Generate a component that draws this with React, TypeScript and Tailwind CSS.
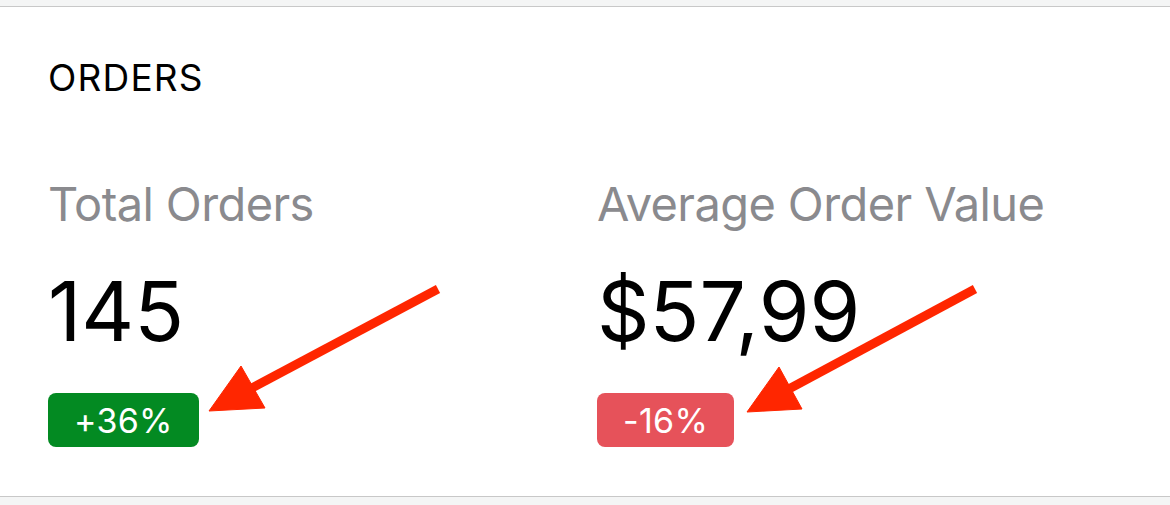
function Metric({ label, value, delta, tone }: { label: string; value: string; delta: string; tone: 'up' | 'down' }) {
  return (
    <div className="flex flex-col items-start">
      <div className="text-[47px] leading-[57px] text-[#8a8a8e] mt-[75px] tracking-[-0.6px]">{label}</div>
      <div className="text-[82px] leading-[82px] text-black mt-[39px]">{value}</div>
      <div
        className={`mt-[40px] h-[54px] rounded-[8px] px-[26px] text-[34px] leading-[54px] pt-px text-white tracking-[0.3px] ${
          tone === 'up' ? 'bg-[#038a22]' : 'bg-[#e6525a]'
        }`}
      >
        {delta}
      </div>
    </div>
  );
}

export default function App() {
  return (
    <div className="relative w-[1170px] h-[505px] bg-[#f4f5f5] font-['Inter',sans-serif] overflow-hidden">
      <div className="h-[6px]" />
      <div className="h-[491px] bg-white border-y border-[#c8c8c8] px-12 pt-[48px]">
        <div className="text-[37px] leading-[45px] text-black tracking-[1.2px]">ORDERS</div>
        <div className="grid grid-cols-[549px_1fr]">
          <Metric label="Total Orders" value="145" delta="+36%" tone="up" />
          <Metric label="Average Order Value" value="$57,99" delta="-16%" tone="down" />
        </div>
      </div>

      {/* annotation arrows */}
      <svg width="1170" height="505" className="absolute left-0 top-0 pointer-events-none">
        <g fill="#ff2600" stroke="#ff2600">
          <line x1="438" y1="289" x2="250" y2="389" strokeWidth="9" />
          <polygon points="209,411 241,366 265,408" strokeWidth="1" />
          <line x1="975" y1="289" x2="787" y2="390" strokeWidth="9" />
          <polygon points="747,412 779,367 802,409" strokeWidth="1" />
        </g>
      </svg>
    </div>
  );
}
